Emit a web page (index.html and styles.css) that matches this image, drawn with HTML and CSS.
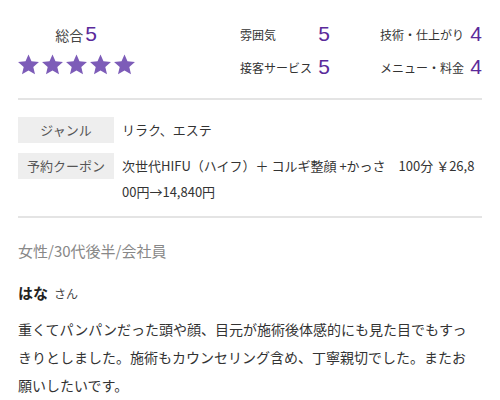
FILE: index.html
```html
<!DOCTYPE html>
<html lang="ja">
<head>
<meta charset="utf-8">
<link rel="stylesheet" href="styles.css">
</head>
<body>
<div class="page">
  <section class="ratings">
    <div class="overall">
      <div class="overall-title">総合<span class="num">5</span></div>
      <div class="stars">
        <svg viewBox="0 0 24 24"><path d="M12 1.5l3.1 7.2 7.8.7-5.9 5.2 1.8 7.7L12 18.3l-6.8 4 1.8-7.7-5.9-5.2 7.8-.7z"/></svg>
        <svg viewBox="0 0 24 24"><path d="M12 1.5l3.1 7.2 7.8.7-5.9 5.2 1.8 7.7L12 18.3l-6.8 4 1.8-7.7-5.9-5.2 7.8-.7z"/></svg>
        <svg viewBox="0 0 24 24"><path d="M12 1.5l3.1 7.2 7.8.7-5.9 5.2 1.8 7.7L12 18.3l-6.8 4 1.8-7.7-5.9-5.2 7.8-.7z"/></svg>
        <svg viewBox="0 0 24 24"><path d="M12 1.5l3.1 7.2 7.8.7-5.9 5.2 1.8 7.7L12 18.3l-6.8 4 1.8-7.7-5.9-5.2 7.8-.7z"/></svg>
        <svg viewBox="0 0 24 24"><path d="M12 1.5l3.1 7.2 7.8.7-5.9 5.2 1.8 7.7L12 18.3l-6.8 4 1.8-7.7-5.9-5.2 7.8-.7z"/></svg>
      </div>
    </div>
    <div class="scores">
      <div class="score"><span class="lbl">雰囲気</span><span class="num">5</span></div>
      <div class="score"><span class="lbl">技術・仕上がり</span><span class="num">4</span></div>
      <div class="score"><span class="lbl">接客サービス</span><span class="num">5</span></div>
      <div class="score"><span class="lbl">メニュー・料金</span><span class="num">4</span></div>
    </div>
  </section>
  <section class="info">
    <div class="row"><div class="tag">ジャンル</div><div class="val">リラク、エステ</div></div>
    <div class="row"><div class="tag">予約クーポン</div><div class="val coupon">次世代HIFU（ハイフ）＋ コルギ整顔 +かっさ　100分 ￥26,800円→14,840円</div></div>
  </section>
  <section class="review">
    <div class="profile">女性/30代後半/会社員</div>
    <div class="name"><b>はな</b><span class="san">さん</span></div>
    <p class="body">重くてパンパンだった頭や顔、目元が施術後体感的にも見た目でもすっきりとしました。施術もカウンセリング含め、丁寧親切でした。またお願いしたいです。</p>
  </section>
</div>
</body>
</html>
```
FILE: styles.css
```css
* { box-sizing: border-box; }
body {
  margin: 0;
  background: #fff;
  color: #333;
  font-family: "Noto Sans CJK JP", "Noto Sans", sans-serif;
}
.page { padding: 0 18px; }
.num {
  font-family: "Liberation Sans", Arial, sans-serif;
  color: #5b2a9a;
  font-size: 21px;
}
.ratings {
  display: flex;
  align-items: flex-start;
  padding-top: 21px;
  height: 100px;
  border-bottom: 2px solid #e4e4e4;
}
.overall {
  width: 116px;
  display: flex;
  flex-direction: column;
  align-items: center;
}
.overall-title {
  font-size: 14px;
  line-height: 26px;
  color: #444;
  white-space: nowrap;
}
.overall-title .num { margin-left: 2px; }
.stars { display: flex; gap: 1px; margin-top: 5px; }
.stars svg { width: 23px; height: 23px; fill: #7d5cb8; }
.scores {
  margin-left: auto;
  display: grid;
  grid-template-columns: 90px 102px;
  column-gap: 50px;
  row-gap: 7px;
}
.score {
  display: flex;
  justify-content: space-between;
  align-items: center;
  height: 26px;
  white-space: nowrap;
}
.score .lbl { font-size: 12px; color: #333; }
.info {
  padding: 17px 0 11px;
  border-bottom: 2px solid #e4e4e4;
}
.row { display: flex; align-items: flex-start; margin-bottom: 10px; }
.row:last-child { margin-bottom: 0; }
.tag {
  flex: none;
  width: 96px;
  height: 26px;
  line-height: 26px;
  background: #eeeeee;
  text-align: center;
  font-size: 13px;
  color: #555;
}
.val {
  margin-left: 8px;
  font-size: 13px;
  line-height: 26px;
  color: #333;
}
.coupon { word-break: break-all; padding-right: 6px; }
.review { padding-top: 21px; }
.profile { font-size: 15px; color: #888; line-height: 24px; }
.name { margin-top: 18px; line-height: 24px; font-size: 15px; }
.name b { font-weight: 700; color: #222; }
.san { font-size: 12px; margin-left: 6px; color: #444; }
.body {
  margin: 9px 10px 0 0;
  font-size: 14px;
  line-height: 28px;
  color: #333;
}
```
